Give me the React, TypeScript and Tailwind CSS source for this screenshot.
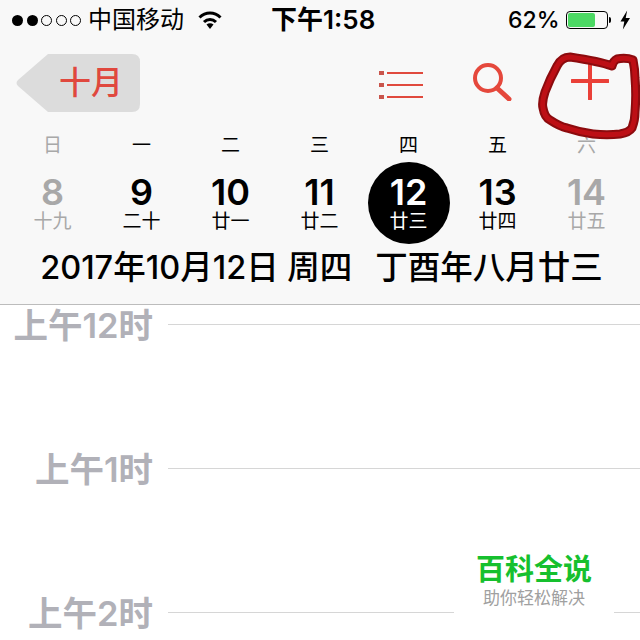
const sans = "font-['Inter','Noto_Sans_CJK_SC',sans-serif]";

const weekdays = [
  { label: "日", muted: true },
  { label: "一" },
  { label: "二" },
  { label: "三" },
  { label: "四" },
  { label: "五" },
  { label: "六", muted: true },
];

const days = [
  { num: "8", lunar: "十九", muted: true },
  { num: "9", lunar: "二十" },
  { num: "10", lunar: "廿一" },
  { num: "11", lunar: "廿二" },
  { num: "12", lunar: "廿三", selected: true },
  { num: "13", lunar: "廿四" },
  { num: "14", lunar: "廿五", muted: true },
];

const hours = ["上午12时", "上午1时", "上午2时"];

// centre line of the red pen mark around the add button
const scribble =
  "M612 66C604 63 590 60 570 57C564 57 560 60 557 66C552 75 548 84 545 92C543 98 542 104 543 108C544 114 546 118 550 120C556 124 562 127 567 128C576 131 585 133 593 134C602 135 612 135 620 134C626 133 630 131 632 128C634 123 635 118 635 112C636 100 636 90 635 78C635 70 634 65 633 60C628 58 622 58 617 59C615 60 613 61 612 66";

const StatusBar = () => {
  return (
    <div className="flex h-[40px] items-center pl-[12px] pr-[10px] text-[24px] leading-none text-black">
      <div className="flex w-[240px] items-center">
        <div className="flex items-center gap-[3.5px]">
          <span className="h-[11px] w-[11px] rounded-full bg-black" />
          <span className="h-[11px] w-[11px] rounded-full bg-black" />
          <span className="h-[11px] w-[11px] rounded-full border border-black" />
          <span className="h-[11px] w-[11px] rounded-full border border-black" />
          <span className="h-[11px] w-[11px] rounded-full border border-black" />
        </div>
        <span className="ml-[7px]">中国移动</span>
        <svg className="ml-[14px]" width="24" height="20" viewBox="0 0 24 20">
          <path d="M1.5 7.5C7.5 1.5 16.5 1.5 22.5 7.5" fill="none" stroke="#000" strokeWidth="3" />
          <path d="M6 12C9.5 8.5 14.5 8.5 18 12" fill="none" stroke="#000" strokeWidth="3" />
          <path d="M8.5 14.5C10.5 12.8 13.5 12.8 15.5 14.5L12 19Z" fill="#000" />
        </svg>
      </div>
      <span className="ml-[19px] text-[26px] font-semibold">下午1:58</span>
      <div className="ml-auto flex w-[122px] items-center">
        <span className="text-[23px] font-medium">62%</span>
        <div className="ml-[6px] h-[18px] w-[44px] rounded-[4px] border border-black p-[1px]">
          <div className="h-full w-[27px] rounded-[2px] bg-[#4cd964]" />
        </div>
        <span className="ml-[1px] h-[6px] w-[2px] rounded-r-full bg-black" />
        <svg className="ml-[9px]" width="11" height="20" viewBox="0 0 11 20">
          <path d="M7.5 0L0.5 11.5H4.5L3 20L10.5 8H6Z" fill="#000" />
        </svg>
      </div>
    </div>
  );
};

const NavBar = () => {
  return (
    <div className="flex h-[90px] items-start pl-[16px] pt-[14px]">
      <div className="relative flex h-[58px] w-[124px] items-center justify-end pr-[17px]">
        <svg className="absolute left-0 top-0" width="124" height="58" viewBox="0 0 124 58">
          <path
            d="M32 0H116Q124 0 124 8V50Q124 58 116 58H32L2 32Q-1 29 2 26Z"
            fill="#dcdcdc"
          />
        </svg>
        <span className="relative text-[32px] font-medium leading-none text-[#e0483e]">十月</span>
      </div>
      <svg className="ml-[238px] mt-[15px]" width="46" height="30" viewBox="0 0 46 30">
        <path d="M1 2h5v4H1zM1 14h5v4H1zM1 26h5v4H1z" fill="#c9554c" />
        <path d="M9 4h36M9 16h36M9 28h36" stroke="#e0493d" strokeWidth="2" fill="none" />
      </svg>
      <svg className="ml-[49px] mt-[9px]" width="40" height="38" viewBox="0 0 40 38">
        <circle cx="15" cy="15" r="13" fill="none" stroke="#e5483c" strokeWidth="4" />
        <path d="M24 25L36 36" stroke="#e5483c" strokeWidth="5" strokeLinecap="round" />
      </svg>
      <svg className="ml-[58px] mt-[8px]" width="38" height="38" viewBox="0 0 38 38">
        <path d="M1 19H37M19 1V37" stroke="#ea4038" strokeWidth="4" strokeLinecap="round" />
      </svg>
    </div>
  );
};

const WeekStrip = () => {
  return (
    <div className="pl-[8px] pr-[9px]">
      <div className="grid h-[30px] grid-cols-7 items-center">
        {weekdays.map((d) => (
          <span
            key={d.label}
            className={`text-center text-[19px] leading-none ${d.muted ? "text-[#a8a8a8]" : "text-black"}`}
          >
            {d.label}
          </span>
        ))}
      </div>
      <div className="mt-[12px] grid grid-cols-7">
        {days.map((d) => (
          <div key={d.num} className="relative flex h-[59px] flex-col items-center">
            {d.selected && (
              <span className="absolute left-1/2 top-[-10px] h-[82px] w-[82px] -translate-x-1/2 rounded-full bg-black" />
            )}
            <span
              className={`relative h-[40px] text-[36px] font-semibold leading-[40px] ${
                d.selected ? "text-white" : d.muted ? "text-[#a8a8a8]" : "text-black"
              }`}
            >
              {d.num}
            </span>
            <span
              className={`relative text-[19px] leading-[19px] ${
                d.selected ? "text-white" : d.muted ? "text-[#a8a8a8]" : "text-black"
              }`}
            >
              {d.lunar}
            </span>
          </div>
        ))}
      </div>
    </div>
  );
};

export default function App() {
  return (
    <div className={`relative h-[640px] w-[640px] overflow-hidden bg-white ${sans}`}>
      <header className="h-[305px] border-b border-[#bcbcbc] bg-[#f8f8f8]">
        <StatusBar />
        <NavBar />
        <WeekStrip />
        <div className="mt-[17px] flex h-[40px] items-center justify-center whitespace-nowrap pl-[3px] text-[32.5px] font-medium leading-none text-black">
          <span>2017年10月12日 周四</span>
          <span className="ml-[23px]">丁酉年八月廿三</span>
        </div>
      </header>

      <main className="flex flex-col gap-[106px]">
        {hours.map((h) => (
          <div key={h} className="flex h-[38px] items-center">
            <span className="w-[153px] whitespace-nowrap pt-[4px] text-right text-[34.5px] font-semibold leading-[38px] text-[#b1b1b8]">
              {h}
            </span>
            <div className="ml-[15px] h-px flex-1 bg-[#d6d6d6]" />
          </div>
        ))}
      </main>

      {/* hand drawn circle around the add button */}
      <svg className="absolute left-0 top-0" width="640" height="640" viewBox="0 0 640 640" fill="none">
        <path d={scribble} stroke="#8c0b0e" strokeWidth="9" strokeLinejoin="round" strokeLinecap="round" />
        <path d={scribble} stroke="#bd0f15" strokeWidth="5" strokeLinejoin="round" strokeLinecap="round" />
      </svg>

      {/* watermark */}
      <div className="absolute left-[454px] top-[545px] flex h-[70px] w-[160px] flex-col items-center bg-white pt-[8px]">
        <span className="text-[29px] font-bold leading-[34px] text-[#16c02e]">百科全说</span>
        <span className="mt-[1px] text-[17px] leading-[20px] text-[#a0a0a0]">助你轻松解决</span>
      </div>
    </div>
  );
}
